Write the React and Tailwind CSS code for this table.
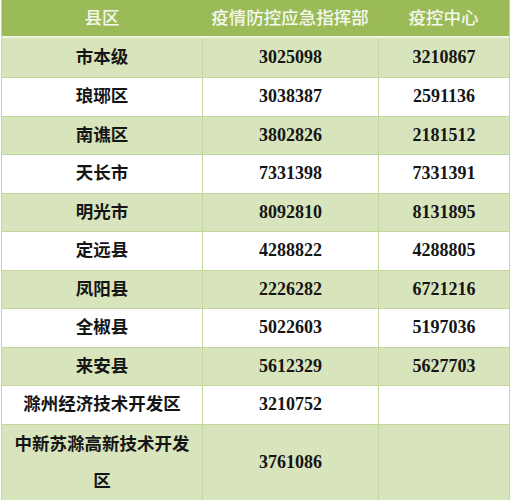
import React from 'react';

const rows = [
  ['市本级', '3025098', '3210867'],
  ['琅琊区', '3038387', '2591136'],
  ['南谯区', '3802826', '2181512'],
  ['天长市', '7331398', '7331391'],
  ['明光市', '8092810', '8131895'],
  ['定远县', '4288822', '4288805'],
  ['凤阳县', '2226282', '6721216'],
  ['全椒县', '5022603', '5197036'],
  ['来安县', '5612329', '5627703'],
  ['滁州经济技术开发区', '3210752', ''],
  ['中新苏滁高新技术开发区', '3761086', ''],
];

const font = { fontFamily: '"Liberation Serif", "Noto Sans CJK SC", serif' };

export default function App() {
  return (
    <div className="w-[513px] h-[500px] overflow-hidden bg-white" style={font}>
      <div className="ml-px w-[509px] border-x border-[#c3d69b]">
        {/* Header */}
        <div className="flex h-[38px] bg-[#9bbb59] text-[#f4f8ec] text-[17.5px] font-medium border-b-2 border-[#eef4e0]">
          <div className="w-[200px] flex items-center justify-center">县区</div>
          <div className="w-[176px] flex items-center justify-center">疫情防控应急指挥部</div>
          <div className="flex-1 flex items-center justify-center">疫控中心</div>
        </div>

        {/* Rows */}
        {rows.map((r, i) => {
          const last = i === rows.length - 1;
          return (
            <div
              key={r[0]}
              className={
                'flex text-[17.5px] font-bold text-[#151515] border-b border-[#c3d69b] ' +
                (i % 2 === 0 ? 'bg-[#d8e4bc] ' : 'bg-white ') +
                (last ? 'h-[77px]' : i === 0 ? 'h-[40px]' : 'h-[38.5px]')
              }
            >
              <div className="w-[200px] px-[11px] flex items-center justify-center text-center leading-[37px]">
                {r[0]}
              </div>
              <div className="w-[176px] border-l border-[#c3d69b] flex items-center justify-center text-[18px]">
                {r[1]}
              </div>
              <div className="flex-1 border-l border-[#c3d69b] flex items-center justify-center text-[18px]">
                {r[2]}
              </div>
            </div>
          );
        })}
      </div>
    </div>
  );
}
